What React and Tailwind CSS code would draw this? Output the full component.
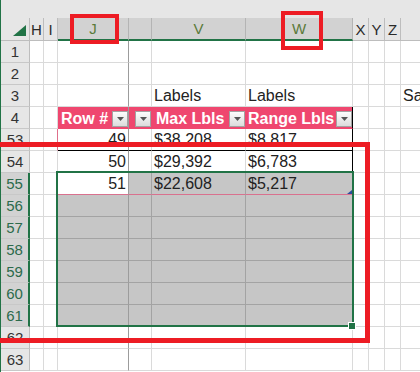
import React from "react";

const CELL_FONT = "font-['Liberation_Sans_Narrow','Liberation_Sans',Arial,sans-serif]";
const HEAD_FONT = "font-['Liberation_Sans',Arial,sans-serif]";

const cols = [
    { id: "H", w: "w-[14px]" },
    { id: "I", w: "w-[14px]" },
    { id: "J", w: "w-[71px]", sel: true },
    { id: "K", w: "w-[23px]", sel: true, blank: true },
    { id: "V", w: "w-[94px]", sel: true },
    { id: "W", w: "w-[107px]", sel: true },
    { id: "X", w: "w-[16px]" },
    { id: "Y", w: "w-[16px]" },
    { id: "Z", w: "w-[16px]" },
    { id: "AA", w: "w-[80px]", blank: true },
];

const rows = [
    { n: 1 },
    { n: 2 },
    { n: 3, V: "Labels", W: "Labels", AA: "Sa" },
    { n: 4, head: true },
    { n: 53, J: "49", V: "$38,208", W: "$8,817" },
    { n: 54, J: "50", V: "$29,392", W: "$6,783" },
    { n: 55, J: "51", V: "$22,608", W: "$5,217" },
    { n: 56 },
    { n: 57 },
    { n: 58 },
    { n: 59 },
    { n: 60 },
    { n: 61 },
    { n: 62 },
    { n: 63 },
];

const tableHead = {
    J: "Row #",
    K: "",
    V: "Max Lbls",
    W: "Range Lbls",
};

const headPad = { J: "pl-[3px]", K: "", V: "pl-[4px]", W: "pl-[2px]" };

const Drop = () => (
    <span className="ml-auto mb-px flex h-[16px] w-[16px] shrink-0 items-center justify-center border border-[#a3a3a3] bg-linear-to-b from-[#fdfdfd] to-[#dcdcdc]">
        <svg width="7" height="4" viewBox="0 0 7 4">
            <path d="M0 0h7L3.5 4z" fill="#555" />
        </svg>
    </span>
);

function cellClass(row, col) {
    const table = col.sel;
    const inSel = table && row.n >= 55 && row.n <= 61;
    const active = row.n === 55 && col.id === "J";

    let bg = "bg-white";
    if (row.head && table) bg = "bg-[#ef476f]";
    else if (inSel && !active) bg = "bg-[#c6c6c6]";

    let br = "border-r-[#dadada]";
    if (col.id === "J") br = "border-r-[#9c9c9c]";
    else if (row.head && (col.id === "K" || col.id === "V")) br = "border-r-[#ef476f]";
    else if (col.id === "W" && (row.head || row.n === 53 || row.n === 54)) br = "border-r-black";
    else if (inSel) br = "border-r-[#a3a3a3]";
    else if (col.id === "I" && row.n === 53) br = "border-r-[#df6f8b]";

    let bb = "border-b-[#dadada]";
    if (table && row.head) bb = "border-b-[#ef476f]";
    else if (table && row.n === 53) bb = "border-b-black";
    else if (table && row.n === 55) bb = "border-b-[#d9718e]";
    else if (inSel) bb = "border-b-[#a3a3a3]";

    return `${col.w} ${bg} ${br} ${bb} shrink-0 border-r border-b overflow-hidden`;
}

const Row = ({ row }) => {
    const selRow = row.n >= 55 && row.n <= 61;
    return (
        <div className="flex h-[22px]">
            <div
                className={`flex w-[29px] shrink-0 items-end justify-center border-b border-b-[#c8c8c8] pb-[2px] text-[15px] leading-[16px] ${HEAD_FONT} ${
                    selRow
                        ? "border-r-2 border-r-[#217346] bg-[#d2d2d2] text-[#2c6a4c]"
                        : "border-r border-r-[#bdbdbd] bg-[#e6e6e6] text-[#333]"
                }`}
            >
                {row.n}
            </div>
            {cols.map((col) => (
                <div key={col.id} className={cellClass(row, col)}>
                    {row.head && col.sel ? (
                        <div className={`flex h-full items-end ${headPad[col.id]}`}>
                            {tableHead[col.id] && (
                                <span className={`${CELL_FONT} mb-[1px] whitespace-nowrap text-[16px] font-bold leading-[16px] text-white`}>
                                    {tableHead[col.id]}
                                </span>
                            )}
                            <Drop />
                        </div>
                    ) : row[col.id] ? (
                        <div
                            className={`flex h-full items-end whitespace-nowrap pb-[2px] text-[16px] leading-[16px] text-[#222] ${CELL_FONT} ${
                                col.id === "J" ? "justify-end pr-[2px]" : "pl-[2px]"
                            }`}
                        >
                            {row[col.id]}
                        </div>
                    ) : null}
                </div>
            ))}
        </div>
    );
};

export default function App() {
    return (
        <div className="relative flex h-[372px] w-[420px] overflow-hidden bg-white">
            <div className="w-px shrink-0 bg-[#217346]" />
            <div className="flex flex-col">
                <div className="flex h-[18px] shrink-0 justify-end bg-[#e6e6e6]">
                    <div className="h-[8px] w-[36px] border-b border-l border-[#d0d0d0] bg-white" />
                </div>
                <div className={`flex h-[23px] shrink-0 text-[15px] ${HEAD_FONT}`}>
                    <div className="flex w-[29px] shrink-0 items-end justify-end border-r border-b border-[#bdbdbd] bg-[#e6e6e6] pr-[3px] pb-[4px]">
                        <svg width="13" height="11" viewBox="0 0 13 11">
                            <path d="M0 11h13V0z" fill="#217346" />
                        </svg>
                    </div>
                    {cols.map((col) => (
                        <div
                            key={col.id}
                            className={`${col.w} flex shrink-0 items-end justify-center overflow-hidden border-r pb-[2px] leading-[16px] ${
                                col.sel
                                    ? "border-b-2 border-r-[#b4b4b4] border-b-[#217346] bg-[#d2d2d2] text-[#5b7a3a]"
                                    : "border-b border-[#bdbdbd] bg-[#e6e6e6] text-[#2a2a2a]"
                            } ${col.id === "J" ? "border-r-[#9c9c9c]" : ""}`}
                        >
                            {col.blank ? "" : col.id}
                        </div>
                    ))}
                </div>
                {rows.map((row) => (
                    <Row key={row.n} row={row} />
                ))}
            </div>

            {/* selection outline + fill handle */}
            <div className="absolute left-[56px] top-[171px] h-[156px] w-[298px] border-2 border-[#217346]" />
            <div className="absolute left-[348px] top-[322px] h-[8px] w-[8px] border border-white bg-[#217346]" />
            <svg className="absolute left-[347px] top-[190px]" width="5" height="4" viewBox="0 0 5 4">
                <path d="M0 4h5V0z" fill="#2d4d9c" />
            </svg>

            {/* red annotation boxes */}
            <div className="absolute left-[70px] top-[14px] h-[30px] w-[49px] border-4 border-[#ed1c24]" />
            <div className="absolute left-[281px] top-[11px] h-[39px] w-[42px] border-4 border-[#ed1c24]" />
            <div className="absolute left-[-10px] top-[142px] h-[201px] w-[380px] border-[5px] border-[#ed1c24]" />
        </div>
    );
}
